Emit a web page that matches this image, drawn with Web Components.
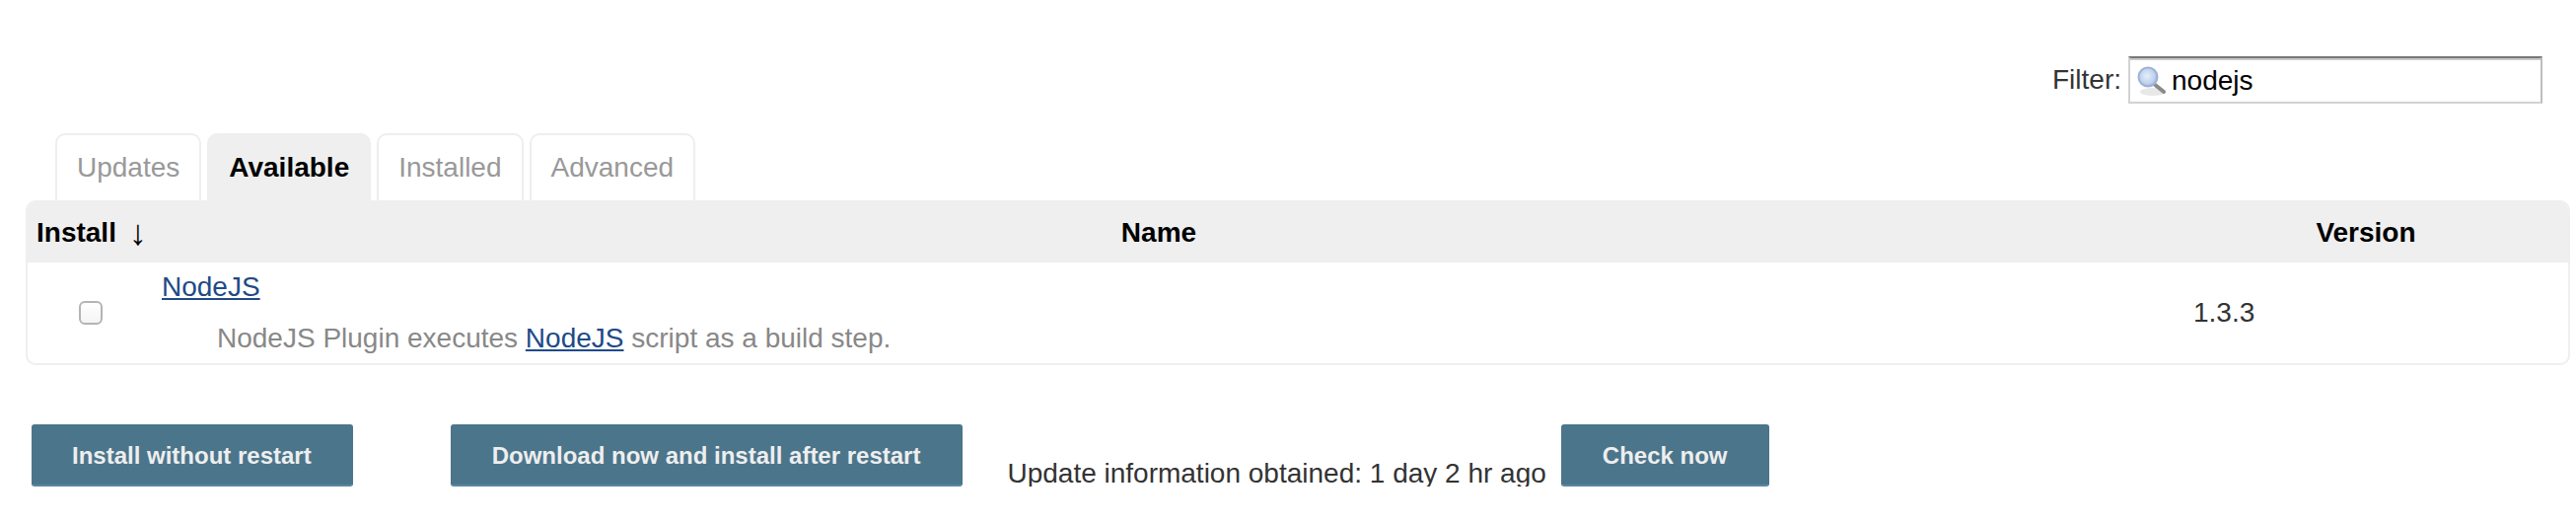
<!DOCTYPE html>
<html>
<head>
<meta charset="utf-8">
<title>Plugin Manager</title>
<style>
  html, body { margin: 0; padding: 0; background: #fff; }
  body { font: 28px/32px "Liberation Sans", Arial, sans-serif; color: #333; }
</style>
</head>
<body>
<plugin-filter value="nodejs"></plugin-filter>
<plugin-tabs>
  <plugin-tab>Updates</plugin-tab>
  <plugin-tab active>Available</plugin-tab>
  <plugin-tab>Installed</plugin-tab>
  <plugin-tab>Advanced</plugin-tab>
</plugin-tabs>
<plugin-table>
  <plugin-row name="NodeJS" version="1.3.3">
    NodeJS Plugin executes <a href="#">NodeJS</a> script as a build step.
  </plugin-row>
</plugin-table>
<plugin-actions>
  <action-button style="padding: 0 40px 0 39px">Install without restart</action-button>
  <action-button style="margin-left: 99px; padding-right: 41px">Download now and install after restart</action-button>
  <span slot="status">Update information obtained: 1 day 2 hr ago</span>
  <action-button slot="check">Check now</action-button>
</plugin-actions>

<script>
class PluginFilter extends HTMLElement {
  constructor() {
    super();
    this.attachShadow({ mode: 'open' });
  }

  connectedCallback() {
    this.shadowRoot.innerHTML = `
      <style>
        :host {
          display: flex;
          justify-content: flex-end;
          align-items: center;
          padding: 57px 34px 0 0;
          color: #333;
        }
        label { margin-right: 7px; }
        .box {
          box-sizing: border-box;
          display: flex;
          align-items: center;
          width: 420px;
          height: 48px;
          border: 2px solid #d2d2d2;
          border-top-color: #777;
          border-right-color: #bdbdbd;
          box-shadow: inset 0 2px 0 #c9c9c9;
          color: #000;
          padding: 2px 0 0 6px;
        }
        svg { flex: none; margin-right: 4px; }
      </style>
      <label>Filter:</label>
      <div class="box">
        <svg width="32" height="32" viewBox="0 0 32 32">
          <defs>
            <radialGradient id="glass" cx="0.45" cy="0.45" r="0.6">
              <stop offset="0" stop-color="#e6eefa"/>
              <stop offset="0.7" stop-color="#bdd0ee"/>
              <stop offset="1" stop-color="#8fa9d6"/>
            </radialGradient>
          </defs>
          <ellipse cx="17" cy="27" rx="13" ry="4" fill="#e8e8e8"/>
          <path d="M18 19 L28 27" stroke="#8a8a8a" stroke-width="4" stroke-linecap="round"/>
          <circle cx="12" cy="12" r="9.5" fill="url(#glass)" stroke="#9cb2d6" stroke-width="2"/>
        </svg>
        <span>${this.getAttribute('value')}</span>
      </div>`;
  }
}

class PluginTabs extends HTMLElement {
  constructor() {
    super();
    this.attachShadow({ mode: 'open' });
    this.shadowRoot.innerHTML = `
      <style>
        :host {
          display: flex;
          gap: 6px;
          margin: 30px 0 0 56px;
        }
      </style>
      <slot></slot>`;
  }
}

class PluginTab extends HTMLElement {
  constructor() {
    super();
    this.attachShadow({ mode: 'open' });
    this.shadowRoot.innerHTML = `
      <style>
        :host {
          box-sizing: border-box;
          display: flex;
          align-items: center;
          height: 68px;
          padding: 0 20px;
          border: 2px solid #eee;
          border-bottom: 0;
          border-radius: 10px 10px 0 0;
          color: #999;
        }
        :host([active]) {
          background: #efefef;
          color: #000;
          font-weight: bold;
        }
      </style>
      <slot></slot>`;
  }
}

class PluginTable extends HTMLElement {
  constructor() {
    super();
    this.attachShadow({ mode: 'open' });
    this.shadowRoot.innerHTML = `
      <style>
        :host {
          display: block;
          box-sizing: border-box;
          margin: 0 6px 0 26px;
          border: 2px solid #efefef;
          border-radius: 10px;
          overflow: hidden;
        }
        .head {
          display: grid;
          grid-template-columns: 128px 2038px 1fr;
          align-items: center;
          height: 61px;
          background: #efefef;
          color: #000;
          font-weight: bold;
        }
        .head > div { text-align: center; }
        .head > .install { text-align: left; padding-left: 9px; white-space: nowrap; }
        .arrow {
          font: 36px/32px "Liberation Serif", serif;
          margin-left: 13px;
          vertical-align: -3px;
        }
      </style>
      <div class="head">
        <div class="install">Install<span class="arrow">↓</span></div>
        <div>Name</div>
        <div>Version</div>
      </div>
      <slot></slot>`;
  }
}

class PluginRow extends HTMLElement {
  constructor() {
    super();
    this.attachShadow({ mode: 'open' });
  }

  connectedCallback() {
    this.shadowRoot.innerHTML = `
      <style>
        :host {
          display: grid;
          grid-template-columns: 128px 2038px 1fr;
          align-items: center;
          height: 102px;
          box-sizing: border-box;
        }
        a, ::slotted(a) { color: #204a87; }
        .check {
          justify-self: center;
          box-sizing: border-box;
          width: 24px;
          height: 24px;
          margin-left: -1px;
          border: 2px solid #b4b4b4;
          border-radius: 6px;
          background: linear-gradient(#fff, #f4f4f4);
        }
        .name { padding-left: 8px; }
        .desc {
          margin: 20px 0 0 56px;
          color: #888;
        }
        .version { padding-left: 30px; }
      </style>
      <div class="check" role="checkbox" aria-checked="false"></div>
      <div class="name">
        <a href="#">${this.getAttribute('name')}</a>
        <div class="desc"><slot></slot></div>
      </div>
      <div class="version">${this.getAttribute('version')}</div>`;
  }
}

class PluginActions extends HTMLElement {
  constructor() {
    super();
    this.attachShadow({ mode: 'open' });
    this.shadowRoot.innerHTML = `
      <style>
        :host {
          display: flex;
          align-items: flex-end;
          margin: 60px 0 0 32px;
        }
        .status { margin: 0 15px -3px 45px; line-height: 32px; }
      </style>
      <slot></slot>
      <span class="status"><slot name="status"></slot></span>
      <slot name="check"></slot>`;
  }
}

class ActionButton extends HTMLElement {
  constructor() {
    super();
    this.attachShadow({ mode: 'open' });
    this.shadowRoot.innerHTML = `
      <style>
        :host {
          box-sizing: border-box;
          display: inline-flex;
          align-items: center;
          height: 63px;
          padding: 0 40px;
          background: #4b758b;
          border: 2px solid #4b758b;
          border-bottom-color: #5a87a3;
          border-radius: 3px;
          color: #eee;
          font-size: 24px;
          font-weight: bold;
          white-space: nowrap;
        }
      </style>
      <slot></slot>`;
  }
}

customElements.define('plugin-filter', PluginFilter);
customElements.define('plugin-tabs', PluginTabs);
customElements.define('plugin-tab', PluginTab);
customElements.define('plugin-table', PluginTable);
customElements.define('plugin-row', PluginRow);
customElements.define('plugin-actions', PluginActions);
customElements.define('action-button', ActionButton);
</script>
</body>
</html>
